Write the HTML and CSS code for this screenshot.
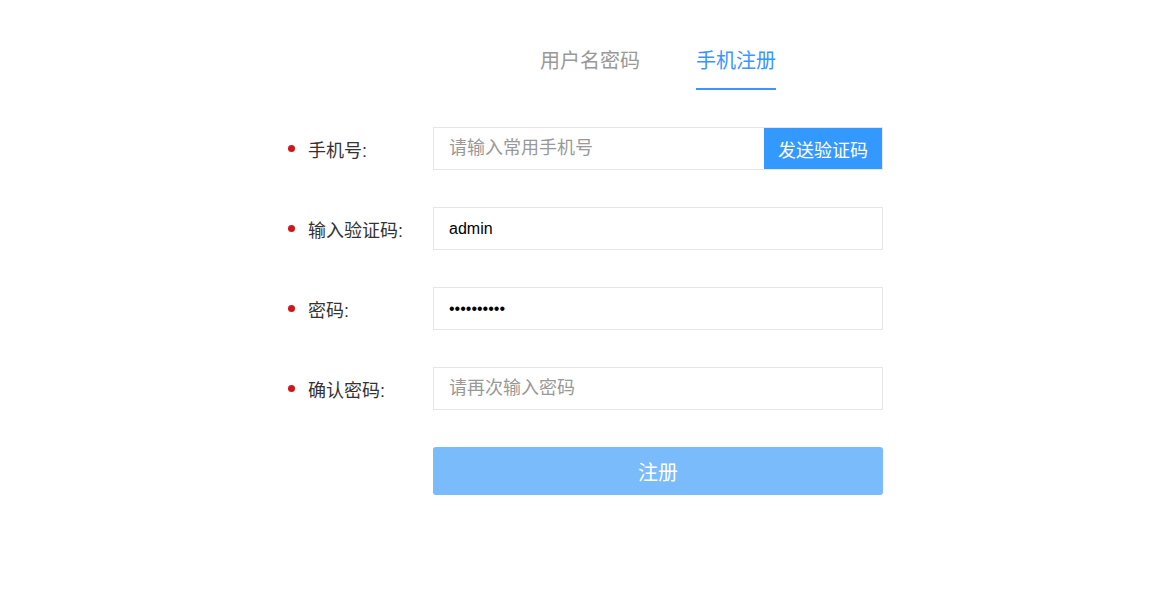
FILE: index.html
```html
<!DOCTYPE html>
<html lang="zh-CN">
<head>
  <meta charset="UTF-8" />
  <title>手机注册</title>
  <link rel="stylesheet" href="styles.css">
</head>
<body>

<div class="register">
  <div class="tabs">
    <div class="tab">用户名密码</div>
    <div class="tab active">手机注册</div>
  </div>

  <form class="form" onsubmit="return false;">
    <div class="row">
      <label class="label"><span class="dot"></span>手机号:</label>
      <div class="field group">
        <input type="text" placeholder="请输入常用手机号">
        <button type="button" class="send-btn">发送验证码</button>
      </div>
    </div>

    <div class="row">
      <label class="label"><span class="dot"></span>输入验证码:</label>
      <div class="field">
        <input type="text" value="admin">
      </div>
    </div>

    <div class="row">
      <label class="label"><span class="dot"></span>密码:</label>
      <div class="field">
        <input type="password" value="1234567890">
      </div>
    </div>

    <div class="row">
      <label class="label"><span class="dot"></span>确认密码:</label>
      <div class="field">
        <input type="password" placeholder="请再次输入密码">
      </div>
    </div>

    <div class="row">
      <div class="label"></div>
      <button type="submit" class="submit-btn">注册</button>
    </div>
  </form>
</div>

</body>
</html>
```

FILE: styles.css
```css
body {
  font-family: "Liberation Sans", "Noto Sans CJK SC", sans-serif;
  background-color: #fff;
  margin: 0;
  padding: 0;
}

.register {
  width: 595px;
  margin: 0 auto;
  padding-left: 8px;
}

.tabs {
  display: flex;
  justify-content: center;
  gap: 56px;
  padding-left: 145px;
  padding-top: 47px;
}

.tab {
  font-size: 20px;
  line-height: 28px;
  color: #999;
  padding-bottom: 13px;
  border-bottom: 2px solid transparent;
  cursor: pointer;
}

.tab.active {
  color: #3a95ff;
  border-bottom-color: #3a95ff;
}

.form {
  margin-top: 37px;
}

.row {
  display: flex;
  align-items: center;
  margin-bottom: 37px;
}

.label {
  width: 145px;
  flex-shrink: 0;
  display: flex;
  align-items: center;
  font-size: 18px;
  color: #333;
}

.dot {
  width: 7px;
  height: 7px;
  border-radius: 50%;
  background-color: #d0161b;
  margin-right: 13px;
}

.field {
  display: flex;
  width: 450px;
  height: 43px;
  border: 1px solid #e6e6e6;
  box-sizing: border-box;
}

.field input {
  flex: 1;
  min-width: 0;
  border: none;
  outline: none;
  padding: 0 15px;
  font-family: "Liberation Sans", "Noto Sans CJK SC", sans-serif;
  font-size: 16px;
  color: #000;
  background: transparent;
}

.field input::placeholder {
  color: #999;
  font-size: 18px;
}

.send-btn {
  width: 118px;
  border: none;
  background-color: #3399ff;
  color: #fff;
  font-family: "Liberation Sans", "Noto Sans CJK SC", sans-serif;
  font-size: 18px;
  cursor: pointer;
  padding: 0;
}

.submit-btn {
  width: 450px;
  height: 48px;
  border: none;
  border-radius: 3px;
  background-color: #7abbfc;
  color: #fff;
  font-family: "Liberation Sans", "Noto Sans CJK SC", sans-serif;
  font-size: 20px;
  cursor: pointer;
}
```
